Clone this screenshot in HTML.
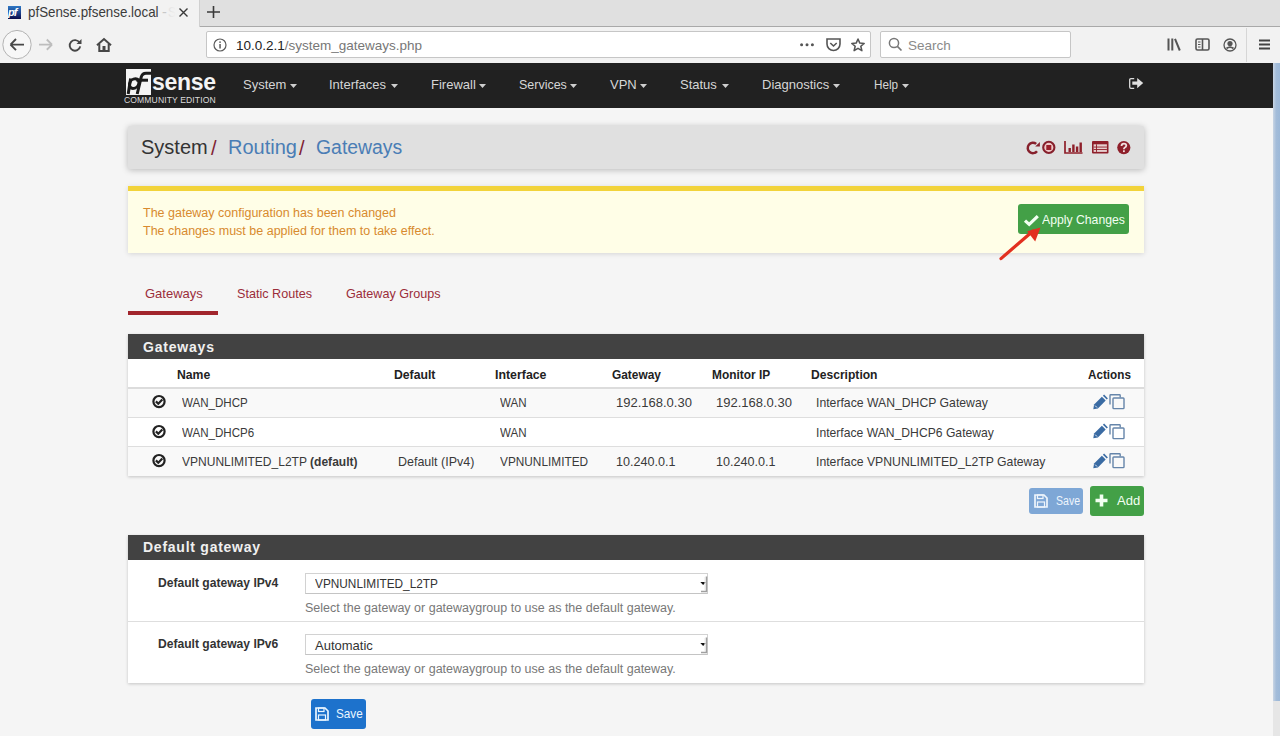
<!DOCTYPE html>
<html><head><meta charset="utf-8">
<style>
*{box-sizing:border-box;margin:0;padding:0}
html,body{width:1280px;height:736px;overflow:hidden;font-family:"Liberation Sans",sans-serif;background:#f5f5f5}
.a{position:absolute}
.t{position:absolute;white-space:nowrap;line-height:1;transform-origin:0 0}
svg{position:absolute;overflow:visible}
.nv{top:78px;font-size:13px;color:#d6d6d6}
.cr{top:84px;width:7px;height:4px;fill:#cfcfcf}
.th{top:367.5px;font-size:13px;font-weight:bold;color:#222}
.td{font-size:13px;color:#3a3a3a}
.ck{left:152px;width:14px;height:13px}
.ck circle{fill:none;stroke:#222;stroke-width:2.2}
.ck path{fill:none;stroke:#222;stroke-width:2.2}
.pen{left:1093px;width:14px;height:13px;fill:#3a6ba3}
.cl{left:1109px;width:16px;height:15px}
.cl path,.cl rect{fill:none;stroke:#6585aa;stroke-width:1.4}
.lb{font-size:13px;font-weight:bold;color:#333}
.sel{left:305px;width:403px;height:21px;background:#fff;border:1px solid #d2d2d2;border-bottom-color:#c4c4c4}
.dd{left:700px;width:7px;height:16px}
.sv{font-size:13px;color:#333}
.hp{font-size:12.5px;color:#787878}

</style></head><body>
<!-- ============ BROWSER CHROME ============ -->
<div class="a" style="left:0;top:0;width:1280px;height:27px;background:#e0e0e0"></div>
<div class="a" style="left:199px;top:26px;width:1081px;height:1px;background:#a9a9a9"></div>
<div class="a" style="left:0;top:0;width:199px;height:27px;background:#f2f2f2"></div>
<div class="a" style="left:199px;top:0;width:1px;height:27px;background:#d0d0d0"></div>
<div class="a" style="left:0;top:27px;width:1280px;height:36px;background:#f2f2f2"></div>

<!-- favicon -->
<div class="a" style="left:8px;top:6px;width:13px;height:13px;background:linear-gradient(#2f78c4,#1a3f8a 55%,#0c0b4a)"></div>
<div class="t" style="left:8px;top:7px;font-size:11px;font-weight:bold;font-style:italic;color:#fff;letter-spacing:-1px">pf</div>
<div class="t" style="left:28px;top:5px;font-size:14.5px;color:#3b3b3b;;transform:scaleX(0.92)">pfSense.pfsense.local</div>
<div class="t" style="left:162px;top:5px;font-size:14.5px;color:#c8c8c8;">-</div>
<div class="t" style="left:168px;top:5px;font-size:14.5px;color:#dcdcdc;transform:scaleX(0.85)">S</div>
<div class="a" style="left:166px;top:0;width:10px;height:25px;background:linear-gradient(90deg,rgba(242,242,242,0),#f2f2f2)"></div>
<svg style="left:179px;top:8px" width="9" height="9"><path d="M0.5 0.5L8.5 8.5M8.5 0.5L0.5 8.5" stroke="#3a3a3a" stroke-width="1.4"/></svg>
<svg style="left:207px;top:6px" width="13" height="12"><path d="M6.5 0V12M0 6H13" stroke="#3a3a3a" stroke-width="1.6"/></svg>
<!-- nav buttons -->
<svg style="left:2px;top:30px" width="30" height="30"><circle cx="15" cy="14.6" r="14.2" fill="#f7f7f7" stroke="#b3b3b3" stroke-width="1"/>
<path d="M8.5 14.6H22M8.5 14.6L14 9M8.5 14.6L14 20.2" stroke="#474747" stroke-width="1.9" fill="none"/></svg>
<svg style="left:38px;top:38px" width="16" height="14"><path d="M1 6.6H14M14 6.6L8.8 1.5M14 6.6L8.8 11.7" stroke="#bdbdbd" stroke-width="1.9" fill="none"/></svg>
<svg style="left:68px;top:38px" width="15" height="14"><path d="M11.5 4.6A5.3 5.3 0 1 0 12.2 8.4" stroke="#474747" stroke-width="1.9" fill="none"/><path d="M13.5 1V6H8.5Z" fill="#474747"/></svg>
<svg style="left:96px;top:38px" width="16" height="14"><path d="M1 7.2L8 1L15 7.2" stroke="#474747" stroke-width="2" fill="none"/><path d="M3.3 6V13H12.7V6" stroke="#474747" stroke-width="2" fill="none"/><rect x="6.5" y="8" width="3" height="4" fill="#474747"/></svg>
<!-- urlbar -->
<div class="a" style="left:206px;top:31px;width:665px;height:27px;background:#fff;border:1px solid #c6c6c6;border-radius:2px"></div>
<svg style="left:213px;top:38px" width="14" height="14"><circle cx="7" cy="7" r="6" fill="none" stroke="#5a5a5a" stroke-width="1.2"/><rect x="6.3" y="6" width="1.5" height="4.5" fill="#5a5a5a"/><rect x="6.3" y="3.4" width="1.5" height="1.5" fill="#5a5a5a"/></svg>
<div class="t" style="left:236px;top:39px;font-size:13.5px;color:#222">10.0.2.1<span style="color:#777">/system_gateways.php</span></div>
<svg style="left:800px;top:43px" width="16" height="4"><circle cx="1.6" cy="1.8" r="1.5" fill="#555"/><circle cx="7" cy="1.8" r="1.5" fill="#555"/><circle cx="12.4" cy="1.8" r="1.5" fill="#555"/></svg>
<svg style="left:826px;top:38px" width="15" height="13"><path d="M1 1H14V6A6.5 6.5 0 0 1 1 6Z" fill="none" stroke="#555" stroke-width="1.6"/><path d="M4.3 5L7.5 8L10.7 5" fill="none" stroke="#555" stroke-width="1.6"/></svg>
<svg style="left:851px;top:38px" width="14" height="14"><path d="M7 1L8.8 5.1L13.2 5.4L9.8 8.3L10.9 12.7L7 10.3L3.1 12.7L4.2 8.3L0.8 5.4L5.2 5.1Z" fill="none" stroke="#555" stroke-width="1.5" stroke-linejoin="round"/></svg>
<!-- search -->
<div class="a" style="left:880px;top:31px;width:191px;height:27px;background:#fff;border:1px solid #c6c6c6;border-radius:2px"></div>
<svg style="left:888px;top:37px" width="15" height="15"><circle cx="6" cy="6" r="4.6" fill="none" stroke="#777" stroke-width="1.5"/><path d="M9.4 9.4L13.5 13.5" stroke="#777" stroke-width="1.7"/></svg>
<div class="t" style="left:908px;top:39px;font-size:13.5px;color:#8a8a8a">Search</div>
<!-- right icons -->
<svg style="left:1167px;top:38px" width="14" height="13"><rect x="0.5" y="0.5" width="2" height="12" fill="#555"/><rect x="4.3" y="0.5" width="2" height="12" fill="#555"/><path d="M8 0.8L12.8 12.5" stroke="#555" stroke-width="2"/></svg>
<svg style="left:1195px;top:38px" width="15" height="13"><rect x="1" y="1" width="13" height="11" rx="1.5" fill="none" stroke="#555" stroke-width="1.6"/><path d="M7.5 1V12" stroke="#555" stroke-width="1.6"/><path d="M3 4H5.5M3 6.5H5.5M3 9H5.5" stroke="#555" stroke-width="1"/></svg>
<svg style="left:1223px;top:38px" width="14" height="14"><circle cx="7" cy="7" r="6" fill="none" stroke="#555" stroke-width="1.3"/><circle cx="7" cy="5.6" r="2.6" fill="#555"/><path d="M3.5 10.5Q7 7.8 10.5 10.5" stroke="#555" stroke-width="1.8" fill="none"/></svg>
<div class="a" style="left:1246px;top:28px;width:1px;height:34px;background:#d6d6d6"></div>
<svg style="left:1259px;top:39px" width="12" height="12"><path d="M0 1.5H11M0 5.5H11M0 9.5H11" stroke="#444" stroke-width="1.8"/></svg>


<!-- ============ PAGE ============ -->
<div class="a" style="left:0;top:63px;width:1273px;height:45px;background:#212121"></div>
<div class="a" style="left:1273px;top:63px;width:7px;height:638px;background:linear-gradient(90deg,#c9d5e4,#a3bcd9 45%,#9cb8d8)"></div>
<!-- logo -->
<div class="a" style="left:126px;top:69px;width:25px;height:26px;background:#f4f4f4"></div>
<svg style="left:126px;top:69px" width="25" height="26"><g fill="none" stroke="#1a1a1a" stroke-width="3"><ellipse cx="8.3" cy="14.6" rx="4.6" ry="4.9" transform="skewX(-12) translate(3 0)"/><path d="M4.6 9.6L2.2 25"/><path d="M11.2 25L15.2 8.2Q16.2 4.2 20 4.2H25"/><path d="M10.4 11.2H22"/></g></svg>
<div class="t" style="left:152px;top:70px;font-size:24px;font-weight:bold;color:#f4f4f4;letter-spacing:-0.3px;transform:scaleX(0.96)">sense</div>
<div class="t" style="left:124px;top:96px;font-size:8.6px;color:#dcdcdc;letter-spacing:0.1px">COMMUNITY EDITION</div>
<!-- menu -->
<div class="t nv" style="left:243px">System</div><svg class="cr" style="left:290px"><path d="M0 0H7L3.5 4Z"/></svg>
<div class="t nv" style="left:329px">Interfaces</div><svg class="cr" style="left:391px"><path d="M0 0H7L3.5 4Z"/></svg>
<div class="t nv" style="left:431px">Firewall</div><svg class="cr" style="left:479px"><path d="M0 0H7L3.5 4Z"/></svg>
<div class="t nv" style="left:519px;transform:scaleX(0.96)">Services</div><svg class="cr" style="left:570px"><path d="M0 0H7L3.5 4Z"/></svg>
<div class="t nv" style="left:610px">VPN</div><svg class="cr" style="left:640px"><path d="M0 0H7L3.5 4Z"/></svg>
<div class="t nv" style="left:680px">Status</div><svg class="cr" style="left:722px"><path d="M0 0H7L3.5 4Z"/></svg>
<div class="t nv" style="left:762px">Diagnostics</div><svg class="cr" style="left:832.5px"><path d="M0 0H7L3.5 4Z"/></svg>
<div class="t nv" style="left:873.5px;transform:scaleX(0.9)">Help</div><svg class="cr" style="left:902px"><path d="M0 0H7L3.5 4Z"/></svg>
<svg style="left:1129px;top:78px" width="15" height="11"><path d="M5.2 0.7H2Q0.7 0.7 0.7 2V9Q0.7 10.3 2 10.3H5.2" stroke="#ddd" stroke-width="1.3" fill="none"/><path d="M3.3 3.4H8.2V0L14.2 5.1L8.2 10.2V6.8H3.3Z" fill="#e0e0e0"/></svg>

<div class="a" style="left:1273px;top:701px;width:7px;height:35px;background:#e6e6e6"></div>

<!-- header -->
<div class="a" style="left:128px;top:125.5px;width:1016px;height:43.5px;background:#e0e0e0;border-radius:2px;box-shadow:0 1px 6px rgba(0,0,0,.25)"></div>
<div class="t" style="left:141px;top:137px;font-size:20px;color:#333">System</div>
<div class="t" style="left:211px;top:138px;font-size:20px;color:#7f2233">/</div>
<div class="t" style="left:228px;top:137px;font-size:20px;color:#4a7db5">Routing</div>
<div class="t" style="left:299px;top:138px;font-size:20px;color:#7f2233">/</div>
<div class="t" style="left:316px;top:137px;font-size:20px;color:#4a7db5;transform:scaleX(0.97)">Gateways</div>
<!-- header icons -->
<svg style="left:1026px;top:141px" width="15" height="13"><path d="M10.2 2.9A5.2 5.2 0 1 0 11 10.2" fill="none" stroke="#86202c" stroke-width="2.5"/><path d="M13.9 0.9V5.6H9.2Z" fill="#86202c"/></svg>
<svg style="left:1042px;top:141px" width="14" height="13"><circle cx="6.8" cy="6.4" r="5.6" fill="#f0c8c8" stroke="#86202c" stroke-width="2.1"/><rect x="4.3" y="4" width="5" height="5" fill="#9a1f2a"/></svg>
<svg style="left:1064px;top:141px" width="19" height="13"><path d="M1 0V12H18.5" fill="none" stroke="#8e1f2a" stroke-width="1.7"/><rect x="4.5" y="7" width="2.4" height="4" fill="#8e1f2a"/><rect x="8.2" y="3.5" width="2.4" height="7.5" fill="#8e1f2a"/><rect x="11.9" y="5.5" width="2.4" height="5.5" fill="#8e1f2a"/><rect x="15.5" y="1.5" width="2.4" height="9.5" fill="#8e1f2a"/></svg>
<svg style="left:1092px;top:141px" width="17" height="13"><rect x="0" y="0" width="16.5" height="12.5" rx="1" fill="#8e1f2a"/><rect x="1.6" y="3.3" width="13.3" height="7.6" fill="#e6cfcf"/><rect x="1.6" y="5.6" width="13.3" height="0.9" fill="#8e1f2a"/><rect x="1.6" y="8.1" width="13.3" height="0.9" fill="#8e1f2a"/><rect x="4" y="3.3" width="0.9" height="7.6" fill="#8e1f2a"/></svg>
<svg style="left:1117px;top:141px" width="14" height="13"><circle cx="6.8" cy="6.6" r="6.6" fill="#8e1f2a"/><path d="M4.5 5.0Q4.6 2.6 6.9 2.6Q9.3 2.6 9.3 4.6Q9.3 5.9 7.6 6.7Q6.9 7.1 6.9 8.2" fill="none" stroke="#f0dede" stroke-width="1.8"/><rect x="6" y="9.3" width="1.8" height="1.8" fill="#f0dede"/></svg>
<!-- alert -->
<div class="a" style="left:128px;top:185.5px;width:1016px;height:67.5px;background:#fffee7;border-top:5.5px solid #f2d33a;box-shadow:0 1px 5px rgba(0,0,0,.13)"></div>
<!-- alert text -->
<div class="t" style="left:143px;top:207px;font-size:12.5px;color:#d88a2e">The gateway configuration has been changed</div>
<div class="t" style="left:143px;top:224.5px;font-size:12.5px;color:#d88a2e">The changes must be applied for them to take effect.</div>
<div class="a" style="left:1018px;top:204px;width:111px;height:30px;background:#43a047;border-radius:3px"></div>
<svg style="left:1024px;top:215px" width="15" height="11"><path d="M1 5.6L5.2 9.4L13.8 1.2" fill="none" stroke="#f2fff2" stroke-width="3.2"/></svg>
<div class="t" style="left:1042px;top:213px;font-size:13px;color:#f2fff2;transform:scaleX(0.94)">Apply Changes</div>
<svg style="left:995px;top:222px" width="50" height="40"><path d="M6 36.6L38 9" stroke="#e2301f" stroke-width="3.2" stroke-linecap="round"/><path d="M45.5 5.5L32.2 9.2L40.2 19.6Z" fill="#e2301f"/></svg>
<!-- tabs -->
<div class="t" style="left:145px;top:287px;font-size:13px;color:#9b2d3a">Gateways</div>
<div class="t" style="left:237px;top:287px;font-size:13px;color:#9b2d3a;transform:scaleX(0.97)">Static Routes</div>
<div class="t" style="left:346px;top:287px;font-size:13px;color:#9b2d3a;transform:scaleX(0.97)">Gateway Groups</div>
<div class="a" style="left:128px;top:311px;width:90px;height:4px;background:#a1252c"></div>

<!-- panel 1 -->
<div class="a" style="left:128px;top:334px;width:1016px;height:142px;background:#fff;box-shadow:0 1px 3px rgba(0,0,0,.2)"></div>
<div class="a" style="left:128px;top:334px;width:1016px;height:25px;background:#424242"></div>
<div class="t" style="left:143px;top:340px;font-size:14px;font-weight:bold;color:#f0f0f0;letter-spacing:0.8px">Gateways</div>
<div class="a" style="left:128px;top:387px;width:1016px;height:2px;background:#dcdcdc"></div>
<div class="a" style="left:128px;top:389px;width:1016px;height:28px;background:#f9f9f9"></div>
<div class="a" style="left:128px;top:417px;width:1016px;height:1px;background:#dedede"></div>
<div class="a" style="left:128px;top:446px;width:1016px;height:1px;background:#dedede"></div>
<div class="a" style="left:128px;top:447px;width:1016px;height:29px;background:#f9f9f9"></div>
<div class="t th" style="left:177px;transform:scaleX(0.94)">Name</div>
<div class="t th" style="left:394px;transform:scaleX(0.94)">Default</div>
<div class="t th" style="left:495px;transform:scaleX(0.95)">Interface</div>
<div class="t th" style="left:612px;transform:scaleX(0.915)">Gateway</div>
<div class="t th" style="left:712px;transform:scaleX(0.915)">Monitor IP</div>
<div class="t th" style="left:811px;transform:scaleX(0.93)">Description</div>
<div class="t th" style="left:1088px;transform:scaleX(0.9)">Actions</div>
<svg class="ck" style="top:395px"><circle cx="7" cy="6.6" r="5.6"/><path d="M3.9 6.4L6.3 8.8L10.3 4.6"/></svg>
<svg class="ck" style="top:424.5px"><circle cx="7" cy="6.6" r="5.6"/><path d="M3.9 6.4L6.3 8.8L10.3 4.6"/></svg>
<svg class="ck" style="top:454px"><circle cx="7" cy="6.6" r="5.6"/><path d="M3.9 6.4L6.3 8.8L10.3 4.6"/></svg>
<div class="t td" style="left:182px;top:396px;transform:scaleX(0.89)">WAN_DHCP</div>
<div class="t td" style="left:500px;top:396px;transform:scaleX(0.89)">WAN</div>
<div class="t td" style="left:616px;top:396px">192.168.0.30</div>
<div class="t td" style="left:716px;top:396px">192.168.0.30</div>
<div class="t td" style="left:816px;top:396px;transform:scaleX(0.94)">Interface WAN_DHCP Gateway</div>
<div class="t td" style="left:182px;top:425.5px;transform:scaleX(0.89)">WAN_DHCP6</div>
<div class="t td" style="left:500px;top:425.5px;transform:scaleX(0.89)">WAN</div>
<div class="t td" style="left:816px;top:425.5px;transform:scaleX(0.935)">Interface WAN_DHCP6 Gateway</div>
<div class="t td" style="left:182px;top:455px;transform:scaleX(0.925)">VPNUNLIMITED_L2TP <b>(default)</b></div>
<div class="t td" style="left:398px;top:455px;transform:scaleX(0.96)">Default (IPv4)</div>
<div class="t td" style="left:500px;top:455px;transform:scaleX(0.91)">VPNUNLIMITED</div>
<div class="t td" style="left:616px;top:455px;transform:scaleX(0.97)">10.240.0.1</div>
<div class="t td" style="left:716px;top:455px;transform:scaleX(0.97)">10.240.0.1</div>
<div class="t td" style="left:816px;top:455px;transform:scaleX(0.94)">Interface VPNUNLIMITED_L2TP Gateway</div>
<svg class="pen" style="top:396px"><path d="M0.3 13.2L1.1 8.6L8.9 0.8L12.7 4.6L4.9 12.4Z"/><path d="M9.9 -0.2L11.1 -1.4L14.9 2.4L13.7 3.6Z"/><path d="M2.1 9.6L4 11.5" stroke="#fff" stroke-width="0.9"/></svg>
<svg class="pen" style="top:425px"><path d="M0.3 13.2L1.1 8.6L8.9 0.8L12.7 4.6L4.9 12.4Z"/><path d="M9.9 -0.2L11.1 -1.4L14.9 2.4L13.7 3.6Z"/><path d="M2.1 9.6L4 11.5" stroke="#fff" stroke-width="0.9"/></svg>
<svg class="pen" style="top:455px"><path d="M0.3 13.2L1.1 8.6L8.9 0.8L12.7 4.6L4.9 12.4Z"/><path d="M9.9 -0.2L11.1 -1.4L14.9 2.4L13.7 3.6Z"/><path d="M2.1 9.6L4 11.5" stroke="#fff" stroke-width="0.9"/></svg>
<svg class="cl" style="top:394px"><path d="M1 10.5V1.5Q1 0.8 1.7 0.8H10.5Q11.2 0.8 11.2 1.5V3.5"/><rect x="4" y="4" width="11" height="10.6" rx="0.8"/></svg>
<svg class="cl" style="top:424px"><path d="M1 10.5V1.5Q1 0.8 1.7 0.8H10.5Q11.2 0.8 11.2 1.5V3.5"/><rect x="4" y="4" width="11" height="10.6" rx="0.8"/></svg>
<svg class="cl" style="top:453px"><path d="M1 10.5V1.5Q1 0.8 1.7 0.8H10.5Q11.2 0.8 11.2 1.5V3.5"/><rect x="4" y="4" width="11" height="10.6" rx="0.8"/></svg>
<!-- save / add -->
<div class="a" style="left:1029px;top:488px;width:54px;height:26px;background:#7ea7d6;border-radius:3px"></div>
<svg style="left:1034px;top:494px" width="14" height="14"><path d="M1 1H10L13 4V13H1Z" fill="none" stroke="#eef5fc" stroke-width="1.7"/><rect x="3.5" y="1" width="5.5" height="3.5" fill="none" stroke="#eef5fc" stroke-width="1.2"/><rect x="3.5" y="8" width="7" height="5" fill="none" stroke="#eef5fc" stroke-width="1.2"/></svg>
<div class="t" style="left:1056px;top:495px;font-size:12px;color:#eef5fc;transform:scaleX(0.88)">Save</div>
<div class="a" style="left:1090px;top:486px;width:54px;height:30px;background:#43a047;border-radius:3px"></div>
<svg style="left:1095px;top:494px" width="13" height="13"><path d="M6.5 0.5V12.5M0.5 6.5H12.5" stroke="#f2fff2" stroke-width="3.6"/></svg>
<div class="t" style="left:1117px;top:494px;font-size:13px;color:#f2fff2">Add</div>

<!-- panel 2 -->
<div class="a" style="left:128px;top:535px;width:1016px;height:148px;background:#fff;box-shadow:0 1px 3px rgba(0,0,0,.2)"></div>
<div class="a" style="left:128px;top:535px;width:1016px;height:25px;background:#424242"></div>
<div class="t" style="left:143px;top:540px;font-size:14px;font-weight:bold;color:#f0f0f0;letter-spacing:0.75px">Default gateway</div>
<div class="a" style="left:128px;top:621px;width:1016px;height:1px;background:#dedede"></div>
<div class="t lb" style="left:158px;top:576px;transform:scaleX(0.93)">Default gateway IPv4</div>
<div class="t lb" style="left:158px;top:637px;transform:scaleX(0.93)">Default gateway IPv6</div>
<div class="a sel" style="top:573px"></div><svg class="dd" style="top:576px"><path d="M0.3 6H6L3.15 9Z" fill="#111"/><path d="M6.5 0.5V15.5H1" stroke="#a0a0a0" stroke-width="1.6" fill="none"/><path d="M5 1V14" stroke="#e8e8e8" stroke-width="1"/></svg>
<div class="t sv" style="left:315px;top:577px;transform:scaleX(0.91)">VPNUNLIMITED_L2TP</div>
<div class="t hp" style="left:305px;top:602px">Select the gateway or gatewaygroup to use as the default gateway.</div>
<div class="a sel" style="top:634px"></div><svg class="dd" style="top:637px"><path d="M0.3 6H6L3.15 9Z" fill="#111"/><path d="M6.5 0.5V15.5H1" stroke="#a0a0a0" stroke-width="1.6" fill="none"/><path d="M5 1V14" stroke="#e8e8e8" stroke-width="1"/></svg>
<div class="t sv" style="left:315px;top:639px">Automatic</div>
<div class="t hp" style="left:305px;top:663px">Select the gateway or gatewaygroup to use as the default gateway.</div>
<div class="a" style="left:311px;top:699px;width:55px;height:30px;background:#1d72cc;border-radius:3px"></div>
<svg style="left:315px;top:707px" width="14" height="14"><path d="M1 1H10L13 4V13H1Z" fill="none" stroke="#eaf6ff" stroke-width="1.7"/><rect x="3.5" y="1" width="5.5" height="3.5" fill="none" stroke="#eaf6ff" stroke-width="1.2"/><rect x="3.5" y="8" width="7" height="5" fill="none" stroke="#eaf6ff" stroke-width="1.2"/></svg>
<div class="t" style="left:336px;top:707px;font-size:13px;color:#eaf6ff;transform:scaleX(0.9)">Save</div>

</body></html>
